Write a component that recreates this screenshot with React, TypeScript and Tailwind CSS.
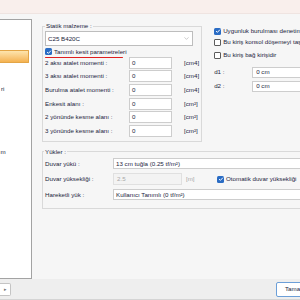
import { ChevronDown } from "lucide-react";

function Check({ checked }: { checked?: boolean }) {
  if (checked) {
    return (
      <span className="w-[7px] h-[7px] shrink-0 rounded-[1.5px] bg-[#2a6cc4] flex items-center justify-center">
        <svg viewBox="0 0 8 8" className="w-[6px] h-[6px]">
          <path d="M1.4 4.1 3.2 5.8 6.6 2.2" fill="none" stroke="white" strokeWidth="1.3" />
        </svg>
      </span>
    );
  }
  return <span className="w-[7px] h-[7px] shrink-0 rounded-[1px] border border-[#5c5c5c] bg-white" />;
}

const sectionRows = [
  { label: "2 aksı atalet momenti :", unit: "[cm4]" },
  { label: "3 aksı atalet momenti :", unit: "[cm4]" },
  { label: "Burulma atalet momenti :", unit: "[cm4]" },
  { label: "Enkesit alanı :", unit: "[cm²]" },
  { label: "2 yönünde kesme alanı :", unit: "[cm²]" },
  { label: "3 yönünde kesme alanı :", unit: "[cm²]" },
];

export default function App() {
  return (
    <div className="w-[300px] h-[300px] overflow-hidden flex flex-col bg-[#f6f6f6] text-[6.2px] leading-[8px] text-[#24243c] font-['Liberation_Sans',Arial,sans-serif]">
      {/* title strip */}
      <div className="h-[14px] shrink-0 bg-[#f9efec] border-b border-[#efe4e1]" />

      <div className="flex h-[265px] shrink-0">
        {/* left tree panel, cut off by the window edge */}
        <div className="w-[32px] shrink-0 mt-[5px] bg-white border-t border-r border-b border-[#a3a3a3] pt-[30px]">
          <div className="w-[29px] h-[13px] rounded-r-[1px] border border-l-0 border-[#e3a546] bg-gradient-to-b from-[#fde4ad] to-[#f4b24f]" />
          <div className="mt-[22px] ml-[1px] h-[8px] whitespace-nowrap">ri</div>
          <div className="mt-[55px] ml-[0.5px] h-[8px] whitespace-nowrap">m</div>
        </div>

        <div className="flex-1 pl-[10px] pt-[8px]">
          <div className="flex">
            <fieldset className="w-[158px] shrink-0 border border-[#d9d9d9] px-[2px] pb-[3.4px]">
              <legend className="px-[1px] leading-[8px]">Statik malzeme :</legend>
              <div className="mt-[1px] w-[148px] h-[15px] bg-white border border-[#bdbdbd] flex items-center justify-between pl-[2px] pr-[2px]">
                <span>C25 B420C</span>
                <ChevronDown size={7} strokeWidth={1.5} className="text-[#8a8a8a]" />
              </div>
              <div className="relative mt-[1px] h-[9px] flex items-center gap-[2px]">
                <Check checked />
                <span>Tanımlı kesit parametreleri</span>
                <span className="absolute left-0 top-[9.5px] w-[78px] h-[1.5px] rounded-full bg-[#e01f1f]" />
              </div>
              {sectionRows.map((row) => (
                <div key={row.label} className="flex items-center h-[13.6px]">
                  <span className="w-[84px] shrink-0 whitespace-nowrap">{row.label}</span>
                  <div className="w-[43px] h-[12px] shrink-0 bg-white border border-[#cdcdcd] flex items-center pl-[2px]">0</div>
                  <span className="ml-[12px] whitespace-nowrap">{row.unit}</span>
                </div>
              ))}
            </fieldset>

            <div className="ml-[12px] w-[120px] shrink-0 pt-[3.5px] whitespace-nowrap">
              <div className="h-[11px] flex items-center gap-[2px]">
                <Check checked />
                <span>Uygunluk burulması denetimi</span>
              </div>
              <div className="h-[11px] flex items-center gap-[2px]">
                <Check />
                <span>Bu kiriş konsol döşemeyi taşıyor</span>
              </div>
              <div className="mt-[2px] h-[11px] flex items-center gap-[2px]">
                <Check />
                <span>Bu kiriş bağ kirişidir</span>
              </div>
              <div className="mt-[6px] h-[11px] flex items-center">
                <span className="w-[38px] shrink-0">d1 :</span>
                <div className="w-[80px] h-[11px] bg-white border border-[#cdcdcd] flex items-center pl-[3px]">0 cm</div>
              </div>
              <div className="mt-[3px] h-[11px] flex items-center">
                <span className="w-[38px] shrink-0">d2 :</span>
                <div className="w-[80px] h-[11px] bg-white border border-[#cdcdcd] flex items-center pl-[3px]">0 cm</div>
              </div>
            </div>
          </div>

          <fieldset className="mt-[6px] w-[280px] border border-[#d9d9d9] px-[2px] pb-[6px]">
            <legend className="-ml-[1px] px-[1px] leading-[8px]">Yükler :</legend>
            <div className="flex items-center h-[15.5px]">
              <span className="w-[68px] shrink-0">Duvar yükü :</span>
              <div className="flex-1 h-[11px] bg-white border border-[#cdcdcd] flex items-center pl-[2px]">13 cm tuğla (0.25 tf/m²)</div>
            </div>
            <div className="flex items-center h-[15.5px] whitespace-nowrap">
              <span className="w-[68px] shrink-0">Duvar yüksekliği :</span>
              <div className="w-[69px] h-[12px] shrink-0 bg-[#f3f3f3] border border-[#e0e0e0] text-[#a9a9a9] flex items-center pl-[3px]">2.5</div>
              <span className="w-[35px] shrink-0 pl-[4px] text-[#a9a9a9]">[m]</span>
              <div className="flex items-center gap-[2px]">
                <Check checked />
                <span>Otomatik duvar yüksekliği</span>
              </div>
            </div>
            <div className="flex items-center h-[15.5px]">
              <span className="w-[68px] shrink-0">Hareketli yük :</span>
              <div className="flex-1 h-[11px] bg-white border border-[#cdcdcd] flex items-center pl-[2px]">Kullanıcı Tanımlı (0 tf/m²)</div>
            </div>
          </fieldset>
        </div>
      </div>

      {/* button strip */}
      <div className="flex-1 flex items-center bg-[#eeeeee] border-b border-[#d4d4d4]">
        <div className="w-[11px] h-[13px] shrink-0 bg-white border border-l-0 border-[#c4c4c4] rounded-r-[2px] flex items-center justify-center text-[5px] text-[#777777]">▸</div>
        <div className="ml-[265px] w-[40px] h-[15px] shrink-0 bg-white border border-[#6c9fd8] rounded-[2px] flex items-center pl-[8px]">Tamam</div>
      </div>
    </div>
  );
}
